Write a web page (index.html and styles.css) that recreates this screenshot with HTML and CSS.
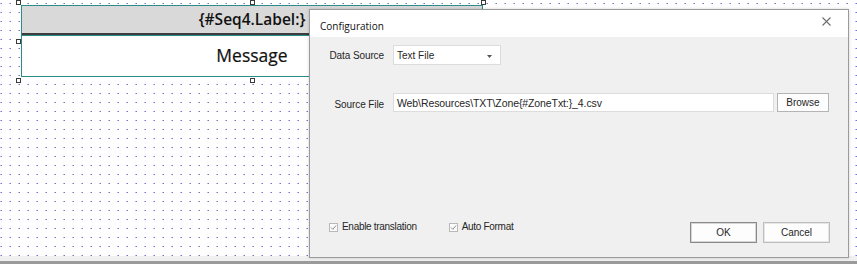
FILE: index.html
```html
<!DOCTYPE html>
<html>
<head>
<meta charset="utf-8">
<link rel="stylesheet" href="styles.css">
</head>
<body>
<div class="screen">
  <div class="canvas">
    <div class="band">
      <div class="band-label">{#Seq4.Label:}</div>
      <div class="band-msg">Message</div>
    </div>
    <span class="handle h-tl"></span>
    <span class="handle h-ml"></span>
    <span class="handle h-bl"></span>
    <span class="handle h-tm"></span>
    <span class="handle h-bm"></span>
    <span class="handle h-tr"></span>
  </div>
  <div class="statusbar"></div>

  <div class="dialog">
    <div class="titlebar">
      <span class="title">Configuration</span>
      <svg class="close" width="9" height="9" viewBox="0 0 9 9"><path d="M0.5 0.5 L8.5 8.5 M8.5 0.5 L0.5 8.5" stroke="#6f6f6f" stroke-width="1.1" fill="none"/></svg>
    </div>
    <div class="body">
      <div class="form">
        <label class="lbl">Data Source</label>
        <div class="combo">
          <span>Text File</span>
          <svg class="arrow" width="5" height="3" viewBox="0 0 5 3"><path d="M0 0 H5 L2.5 3 Z" fill="#555"/></svg>
        </div>
        <label class="lbl lbl-file">Source File</label>
        <div class="file-row">
          <div class="textbox">Web\Resources\TXT\Zone{#ZoneTxt:}_4.csv</div>
          <button class="btn btn-browse">Browse</button>
        </div>
      </div>
      <div class="footer">
        <div class="checks">
          <div class="check">
            <svg width="9" height="9" viewBox="0 0 9 9"><rect x="0.5" y="0.5" width="8" height="8" fill="#fbfbfb" stroke="#b9b9b9"/><path d="M2 4.5 L3.8 6.3 L7 2.6" stroke="#8c8c8c" stroke-width="1" fill="none"/></svg>
            <span>Enable translation</span>
          </div>
          <div class="check">
            <svg width="9" height="9" viewBox="0 0 9 9"><rect x="0.5" y="0.5" width="8" height="8" fill="#fbfbfb" stroke="#b9b9b9"/><path d="M2 4.5 L3.8 6.3 L7 2.6" stroke="#8c8c8c" stroke-width="1" fill="none"/></svg>
            <span>Auto Format</span>
          </div>
        </div>
        <div class="buttons">
          <button class="btn btn-ok">OK</button>
          <button class="btn btn-cancel">Cancel</button>
        </div>
      </div>
    </div>
  </div>
</div>
</body>
</html>
```

FILE: styles.css
```css
* { box-sizing: border-box; }
html, body { margin: 0; padding: 0; }
body { width: 857px; height: 264px; overflow: hidden; background: #fff; }

.screen { position: relative; width: 857px; height: 264px; }

.canvas {
  position: relative;
  height: 256px;
  background-color: #fff;
  background-image:
    linear-gradient(to bottom, transparent 1px, #fff 1px),
    linear-gradient(to right, #b4b4ea 1px, #7474cc 1px, #7474cc 2px, transparent 2px);
  background-size: 9px 9px, 9px 9px;
  background-position: 0 3px, 0 3px;
}

.statusbar {
  height: 8px;
  background: #f0f0f0;
  border-bottom: 3px solid #9a9a9a;
}

/* designer band */
.band {
  position: absolute;
  left: 21px;
  top: 5px;
  width: 462px;
  border: 1px solid #2a8c88;
  background: #fff;
  font-family: "Open Sans", "Noto Sans", sans-serif;
  color: #111;
}
.band-label {
  height: 29px;
  background: #d9d9d9;
  border-bottom: 2px solid #3d3d3d;
  display: flex;
  align-items: center;
  justify-content: center;
  font-weight: 600;
  font-size: 15.5px;
  padding-bottom: 1px;
}
.band-msg {
  height: 41px;
  border-top: 1px solid #2a8c88;
  display: flex;
  align-items: center;
  justify-content: center;
  font-size: 17.5px;
  padding-bottom: 2px;
  -webkit-text-stroke: 0.2px #111;
}

.handle {
  position: absolute;
  width: 5px;
  height: 5px;
  border: 1px solid #3a3a3a;
  background: #fff;
}
.h-tl { left: 16px; top: 0; }
.h-ml { left: 16px; top: 39px; }
.h-bl { left: 16px; top: 78px; }
.h-tm { left: 250px; top: 0; }
.h-bm { left: 250px; top: 78px; }
.h-tr { left: 481px; top: 0; }

/* dialog */
.dialog {
  position: absolute;
  left: 309px;
  top: 9px;
  width: 540px;
  height: 249px;
  border: 1px solid #9c9c9c;
  box-shadow: 0 0 3px rgba(0,0,0,0.18);
  background: #f0f0f0;
  display: flex;
  flex-direction: column;
  font-family: "Liberation Sans", Arial, sans-serif;
  font-size: 10px;
  color: #262626;
}
.titlebar {
  height: 27px;
  background: #fff;
  display: flex;
  justify-content: space-between;
  align-items: flex-start;
  padding: 0 17px 0 10px;
}
.title {
  font-family: "Open Sans", "Noto Sans", sans-serif;
  font-size: 10px;
  color: #111;
  margin-top: 9px;
}
.close { margin-top: 7px; }

.body {
  flex: 1;
  display: flex;
  flex-direction: column;
  justify-content: space-between;
  padding: 8px 18px 14px 11px;
}

.form {
  display: grid;
  grid-template-columns: 63px 1fr;
  column-gap: 9px;
  row-gap: 28px;
  align-items: center;
}
.lbl { text-align: right; letter-spacing: -0.1px; }
.lbl-file { padding-top: 3px; }

.combo {
  width: 108px;
  height: 20px;
  background: #fff;
  border: 1px solid #dcdcdc;
  display: flex;
  align-items: center;
  justify-content: space-between;
  padding: 0 8px 0 3px;
}
.arrow { margin-top: 2px; }

.file-row {
  display: flex;
  gap: 3px;
  margin-right: -1px;
}
.textbox {
  width: 381px;
  height: 19px;
  background: #fff;
  border: 1px solid #dcdcdc;
  padding: 0 3px;
  display: flex;
  align-items: center;
  font-size: 10.5px;
  letter-spacing: -0.1px;
}
.btn {
  font-family: "Liberation Sans", Arial, sans-serif;
  font-size: 10px;
  color: #262626;
  background: #fdfdfd;
  border: 1px solid #b4b4b4;
  padding: 0;
  margin: 0;
}
.btn-browse { width: 52px; height: 19px; }

.footer {
  display: flex;
  justify-content: space-between;
  align-items: flex-start;
}
.checks {
  display: flex;
  gap: 32px;
  padding-left: 8px;
  margin-top: 0;
  line-height: 10px;
}
.check {
  display: flex;
  align-items: center;
  gap: 4px;
  letter-spacing: -0.3px;
}
.check svg { display: block; }

.buttons { display: flex; gap: 6px; }
.btn-ok, .btn-cancel { width: 67px; height: 21px; }
.btn-ok { border: 1px solid #8a8a8a; box-shadow: inset 0 0 0 1px #d6d6d6; }
.btn-cancel { border: 1px solid #bdbdbd; box-shadow: inset 0 0 0 1px #e6e6e6; }
```
